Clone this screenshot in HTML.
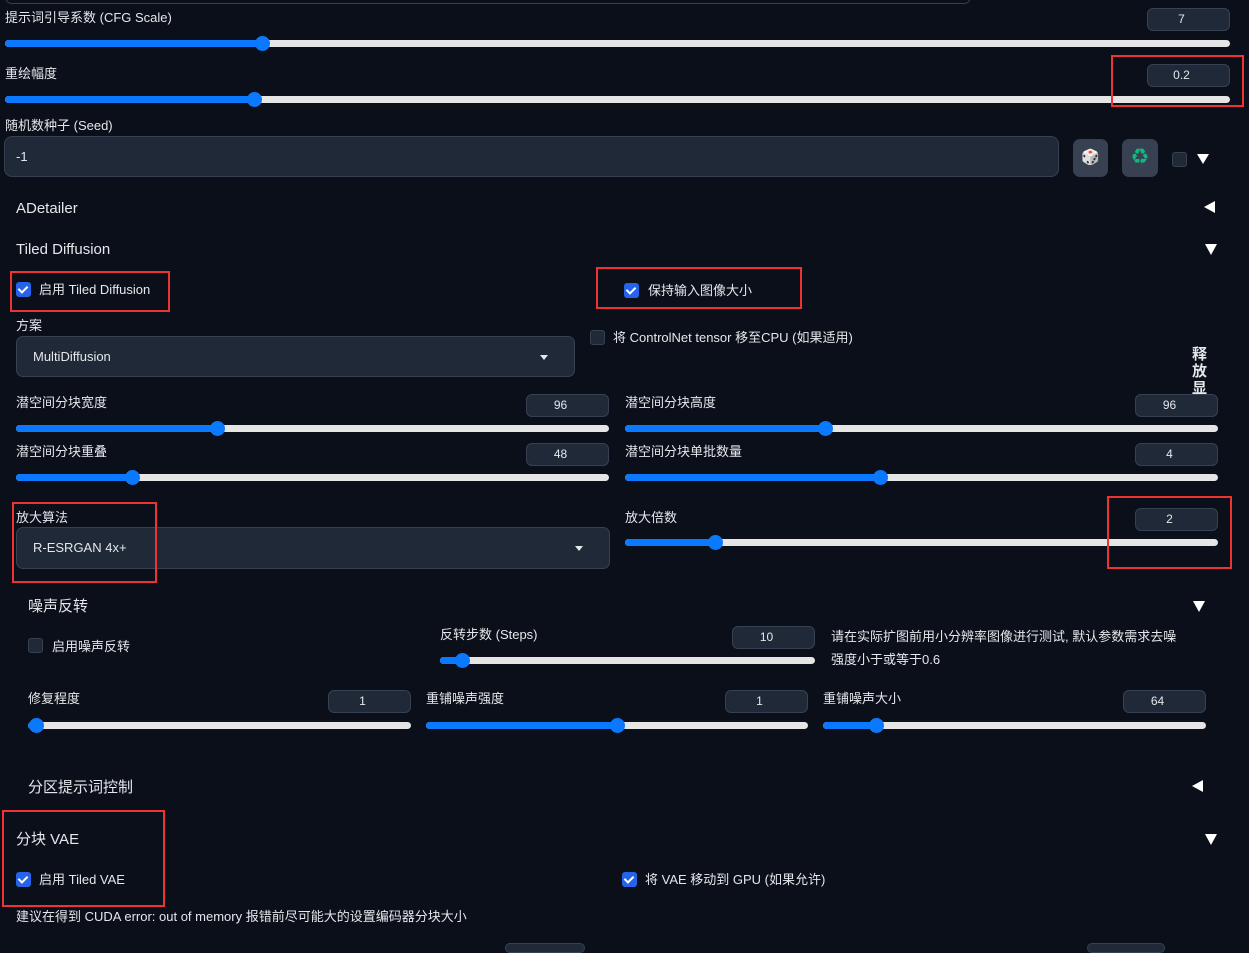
<!DOCTYPE html>
<html><head><meta charset="utf-8">
<style>
*{box-sizing:border-box;margin:0;padding:0}
body{width:1249px;height:946px;background:#0b0f19;overflow:hidden;position:relative;font-family:"Liberation Sans","Noto Sans CJK SC",sans-serif;color:#e5e7eb;font-size:13px}
.a{position:absolute;white-space:nowrap}
.t{position:absolute;white-space:nowrap;line-height:18px;font-size:13px;color:#e5e7eb;margin-top:1px}
.h{position:absolute;white-space:nowrap;line-height:20px;font-size:15px;color:#e5e7eb;margin-top:1px}
.n{position:absolute;height:23px;width:83px;background:#1f2937;border:1px solid #374151;border-radius:6px;text-align:center;line-height:21px;font-size:12px;color:#e5e7eb;padding-right:14px}
.sl{position:absolute;height:7px;background:#e5e5e5;border-radius:4px}
.sl i{position:absolute;left:0;top:0;height:7px;background:#0a78ff;border-radius:4px}
.sl b{position:absolute;top:-4px;width:15px;height:15px;border-radius:50%;background:#0a78ff}
.cb{position:absolute;width:15px;height:15px;border-radius:3px;background:#2563eb}
.cb:after{content:"";position:absolute;left:4px;top:2px;width:4px;height:7px;border:solid #fff;border-width:0 2px 2px 0;transform:rotate(45deg)}
.cu{position:absolute;width:15px;height:15px;border-radius:3px;background:#1f2937;border:1px solid #374151}
.dd{position:absolute;background:#1f2937;border:1px solid #374151;border-radius:7px}
.dd span{position:absolute;left:16px;top:11px;font-size:13px;line-height:18px}
.dd em{position:absolute;top:18px;width:0;height:0;border-left:4px solid transparent;border-right:4px solid transparent;border-top:5px solid #e5e7eb}
.red{position:absolute;border:2px solid #ee3333}
.tri{position:absolute;width:0;height:0}
.down{border-left:6px solid transparent;border-right:6px solid transparent;border-top:11px solid #fff}
.left{border-top:6px solid transparent;border-bottom:6px solid transparent;border-right:11px solid #fff}
</style></head><body>
<div class="a" style="left:5px;top:-10px;width:966px;height:14px;border:1px solid #374151;border-radius:7px"></div>

<div class="t" style="left:5px;top:8px">提示词引导系数 (CFG Scale)</div>
<div class="n" style="left:1147px;top:8px">7</div>
<div class="sl" style="left:5px;top:40px;width:1225px"><i style="width:260px"></i><b style="left:250px"></b></div>

<div class="t" style="left:5px;top:64px">重绘幅度</div>
<div class="n" style="left:1147px;top:64px">0.2</div>
<div class="sl" style="left:5px;top:96px;width:1225px"><i style="width:252px"></i><b style="left:242px"></b></div>
<div class="red" style="left:1111px;top:55px;width:133px;height:52px"></div>

<div class="t" style="left:5px;top:116px">随机数种子 (Seed)</div>
<div class="a" style="left:4px;top:136px;width:1055px;height:41px;background:#1f2937;border:1px solid #374151;border-radius:8px"></div>
<div class="t" style="left:16px;top:147px">-1</div>
<div class="a" style="left:1073px;top:139px;width:35px;height:38px;background:#374151;border-radius:7px;text-align:center;line-height:38px;font-size:15px">🎲</div>
<div class="a" style="left:1122px;top:139px;width:36px;height:38px;background:#374151;border-radius:7px;text-align:center;line-height:38px;font-size:16px;color:#10b981">♻</div>
<div class="cu" style="left:1172px;top:152px"></div>
<div class="tri down" style="left:1197px;top:154px;border-top-width:10px"></div>

<div class="h" style="left:16px;top:198px">ADetailer</div>
<div class="tri left" style="left:1204px;top:201px"></div>
<div class="h" style="left:16px;top:239px">Tiled Diffusion</div>
<div class="tri down" style="left:1205px;top:244px"></div>

<div class="red" style="left:10px;top:271px;width:160px;height:41px"></div>
<div class="cb" style="left:16px;top:282px"></div>
<div class="t" style="left:39px;top:280px">启用 Tiled Diffusion</div>
<div class="red" style="left:596px;top:267px;width:206px;height:42px"></div>
<div class="cb" style="left:624px;top:283px"></div>
<div class="t" style="left:648px;top:281px">保持输入图像大小</div>

<div class="t" style="left:16px;top:316px">方案</div>
<div class="dd" style="left:16px;top:336px;width:559px;height:41px"><span>MultiDiffusion</span><em style="left:523px"></em></div>
<div class="cu" style="left:590px;top:330px"></div>
<div class="t" style="left:613px;top:328px">将 ControlNet tensor 移至CPU (如果适用)</div>
<div class="a" style="left:1192px;top:346px;width:18px;height:48px;overflow:hidden;font-size:15px;line-height:17px;font-weight:bold;white-space:normal;word-break:break-all">释放显</div>

<div class="t" style="left:16px;top:393px">潜空间分块宽度</div>
<div class="n" style="left:526px;top:394px">96</div>
<div class="sl" style="left:16px;top:425px;width:593px"><i style="width:202px"></i><b style="left:194px"></b></div>
<div class="t" style="left:625px;top:393px">潜空间分块高度</div>
<div class="n" style="left:1135px;top:394px">96</div>
<div class="sl" style="left:625px;top:425px;width:593px"><i style="width:200px"></i><b style="left:193px"></b></div>

<div class="t" style="left:16px;top:442px">潜空间分块重叠</div>
<div class="n" style="left:526px;top:443px">48</div>
<div class="sl" style="left:16px;top:474px;width:593px"><i style="width:117px"></i><b style="left:109px"></b></div>
<div class="t" style="left:625px;top:442px">潜空间分块单批数量</div>
<div class="n" style="left:1135px;top:443px">4</div>
<div class="sl" style="left:625px;top:474px;width:593px"><i style="width:255px"></i><b style="left:248px"></b></div>

<div class="t" style="left:16px;top:508px">放大算法</div>
<div class="dd" style="left:16px;top:527px;width:594px;height:42px"><span>R-ESRGAN 4x+</span><em style="left:558px"></em></div>
<div class="red" style="left:12px;top:502px;width:145px;height:81px"></div>
<div class="t" style="left:625px;top:508px">放大倍数</div>
<div class="n" style="left:1135px;top:508px">2</div>
<div class="sl" style="left:625px;top:539px;width:593px"><i style="width:90px"></i><b style="left:83px"></b></div>
<div class="red" style="left:1107px;top:496px;width:125px;height:73px"></div>

<div class="h" style="left:28px;top:596px">噪声反转</div>
<div class="tri down" style="left:1193px;top:601px"></div>
<div class="cu" style="left:28px;top:638px"></div>
<div class="t" style="left:52px;top:637px">启用噪声反转</div>
<div class="t" style="left:440px;top:625px">反转步数 (Steps)</div>
<div class="n" style="left:732px;top:626px">10</div>
<div class="sl" style="left:440px;top:657px;width:375px"><i style="width:22px"></i><b style="left:15px"></b></div>
<div class="t" style="left:831px;top:627px">请在实际扩图前用小分辨率图像进行测试, 默认参数需求去噪</div>
<div class="t" style="left:831px;top:650px">强度小于或等于0.6</div>

<div class="t" style="left:28px;top:689px">修复程度</div>
<div class="n" style="left:328px;top:690px">1</div>
<div class="sl" style="left:28px;top:722px;width:383px"><i style="width:8px"></i><b style="left:1px"></b></div>
<div class="t" style="left:426px;top:689px">重铺噪声强度</div>
<div class="n" style="left:725px;top:690px">1</div>
<div class="sl" style="left:426px;top:722px;width:382px"><i style="width:191px"></i><b style="left:184px"></b></div>
<div class="t" style="left:823px;top:689px">重铺噪声大小</div>
<div class="n" style="left:1123px;top:690px">64</div>
<div class="sl" style="left:823px;top:722px;width:383px"><i style="width:53px"></i><b style="left:46px"></b></div>

<div class="h" style="left:28px;top:777px">分区提示词控制</div>
<div class="tri left" style="left:1192px;top:780px"></div>

<div class="red" style="left:2px;top:810px;width:163px;height:97px"></div>
<div class="h" style="left:16px;top:829px">分块 VAE</div>
<div class="tri down" style="left:1205px;top:834px"></div>
<div class="cb" style="left:16px;top:872px"></div>
<div class="t" style="left:39px;top:870px">启用 Tiled VAE</div>
<div class="cb" style="left:622px;top:872px"></div>
<div class="t" style="left:645px;top:870px">将 VAE 移动到 GPU (如果允许)</div>
<div class="t" style="left:16px;top:907px">建议在得到 CUDA error: out of memory 报错前尽可能大的设置编码器分块大小</div>

<div class="a" style="left:505px;top:943px;width:80px;height:10px;border:1px solid #374151;border-radius:6px;background:#1f2937"></div>
<div class="a" style="left:1087px;top:943px;width:78px;height:10px;border:1px solid #374151;border-radius:6px;background:#1f2937"></div>
</body></html>
